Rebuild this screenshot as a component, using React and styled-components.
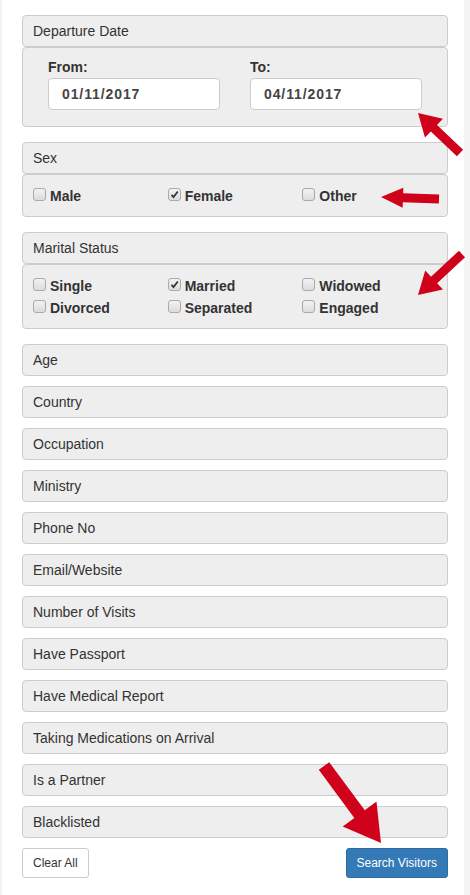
import React from 'react'
import styled, { createGlobalStyle } from 'styled-components'

const Global = createGlobalStyle`
  html, body { margin: 0; padding: 0; background: #f4f4f4; }
  body {
    font-family: "Liberation Sans", Arial, sans-serif;
    font-size: 14px;
    color: #333;
  }
`

const Page = styled.div`
  position: relative;
  margin: 0 6px 0 2px;
  background: #fff;
  min-height: 895px;
  padding: 15px 16px 15px 20px;
  box-sizing: border-box;
`

const Group = styled.div`
  margin-bottom: ${p => (p.$gap ? p.$gap : 10)}px;
`

const Heading = styled.div`
  background: #eee;
  border: 1px solid #ccc;
  border-radius: 4px;
  height: 32px;
  box-sizing: border-box;
  padding: 0 10px;
  display: flex;
  align-items: center;
  line-height: 1;
`

const Body = styled.div`
  background: #eee;
  border: 1px solid #ccc;
  border-radius: 4px;
  padding: ${p => p.$pad || '10px'};
  box-sizing: border-box;
`

const DateRow = styled.div`
  display: grid;
  grid-template-columns: 1fr 1fr;
`

const DateCol = styled.div`
  padding: 0 15px;
`

const Label = styled.div`
  font-weight: bold;
  line-height: 16px;
  margin-bottom: 3px;
`

const DateInput = styled.div`
  height: 32px;
  box-sizing: border-box;
  background: #fff;
  border: 1px solid #ccc;
  border-radius: 4px;
  padding: 0 13px;
  display: flex;
  align-items: center;
  font-weight: bold;
  color: #444;
  letter-spacing: 0.9px;
`

const Checks = styled.div`
  display: grid;
  grid-template-columns: repeat(3, 1fr);
  row-gap: 8px;
`

const Check = styled.label`
  display: flex;
  align-items: center;
  gap: 4px;
  font-weight: bold;
  line-height: 14px;
`

const Box = styled.span`
  width: 11px;
  height: 11px;
  border: 1px solid #aaa;
  border-radius: 3px;
  background: linear-gradient(#f2f2f2, #dcdcdc);
  display: flex;
  align-items: center;
  justify-content: center;
  margin-top: -3px;
`

const Footer = styled.div`
  display: flex;
  justify-content: space-between;
`

const Button = styled.button`
  font-family: inherit;
  font-size: 12px;
  height: 30px;
  padding: 0 10px;
  border-radius: 3px;
  border: 1px solid ${p => (p.$primary ? '#2e6da4' : '#ccc')};
  background: ${p => (p.$primary ? '#337ab7' : '#fff')};
  color: ${p => (p.$primary ? '#fff' : '#333')};
`

const Arrow = styled.svg`
  position: absolute;
  left: 0;
  top: 0;
  overflow: visible;
`

const Checkbox = ({ label, checked }) => (
  <Check>
    <Box>
      {checked && (
        <svg width="9" height="9" viewBox="0 0 9 9">
          <path d="M1.5 4.8 L3.5 7 L7.8 1.5" fill="none" stroke="#333" strokeWidth="1.8" />
        </svg>
      )}
    </Box>
    {label}
  </Check>
)

const Panel = ({ title }) => (
  <Group>
    <Heading>{title}</Heading>
  </Group>
)

const simple = [
  'Age', 'Country', 'Occupation', 'Ministry', 'Phone No', 'Email/Website',
  'Number of Visits', 'Have Passport', 'Have Medical Report',
  'Taking Medications on Arrival', 'Is a Partner', 'Blacklisted',
]

// red annotation arrow: tail (x1,y1) -> head (x2,y2)
const RedArrow = ({ x1, y1, x2, y2, w = 7, head = 18, hw = 13 }) => {
  const dx = x2 - x1, dy = y2 - y1
  const len = Math.hypot(dx, dy)
  const ux = dx / len, uy = dy / len
  const nx = -uy, ny = ux
  const bx = x2 - ux * head, by = y2 - uy * head
  const pts = [
    [x1 + nx * w / 2, y1 + ny * w / 2],
    [bx + nx * w / 2, by + ny * w / 2],
    [bx + nx * hw, by + ny * hw],
    [x2, y2],
    [bx - nx * hw, by - ny * hw],
    [bx - nx * w / 2, by - ny * w / 2],
    [x1 - nx * w / 2, y1 - ny * w / 2],
  ]
  return (
    <Arrow width="1" height="1">
      <polygon points={pts.map(p => p.join(',')).join(' ')} fill="#d0021b" />
    </Arrow>
  )
}

export default function App() {
  return (
    <>
      <Global />
      <Page>
        <Group $gap={15}>
          <Heading>Departure Date</Heading>
          <Body $pad="11px 10px 16px">
            <DateRow>
              <DateCol>
                <Label>From:</Label>
                <DateInput>01/11/2017</DateInput>
              </DateCol>
              <DateCol>
                <Label>To:</Label>
                <DateInput>04/11/2017</DateInput>
              </DateCol>
            </DateRow>
          </Body>
        </Group>

        <Group $gap={15}>
          <Heading>Sex</Heading>
          <Body $pad="14px 10px 13px">
            <Checks>
              <Checkbox label="Male" />
              <Checkbox label="Female" checked />
              <Checkbox label="Other" />
            </Checks>
          </Body>
        </Group>

        <Group $gap={15}>
          <Heading>Marital Status</Heading>
          <Body $pad="14px 10px 13px">
            <Checks>
              <Checkbox label="Single" />
              <Checkbox label="Married" checked />
              <Checkbox label="Widowed" />
              <Checkbox label="Divorced" />
              <Checkbox label="Separated" />
              <Checkbox label="Engaged" />
            </Checks>
          </Body>
        </Group>

        {simple.map(t => <Panel key={t} title={t} />)}

        <Footer>
          <Button>Clear All</Button>
          <Button $primary>Search Visitors</Button>
        </Footer>

        <RedArrow x1={458} y1={153} x2={416} y2={113} w={9} head={22} hw={13} />
        <RedArrow x1={437} y1={199} x2={379} y2={197} w={9} head={22} hw={10} />
        <RedArrow x1={460} y1={254} x2={416} y2={295} w={9} head={22} hw={13} />
        <RedArrow x1={322} y1={766} x2={379} y2={843} w={13} head={36} hw={21} />
      </Page>
    </>
  )
}
